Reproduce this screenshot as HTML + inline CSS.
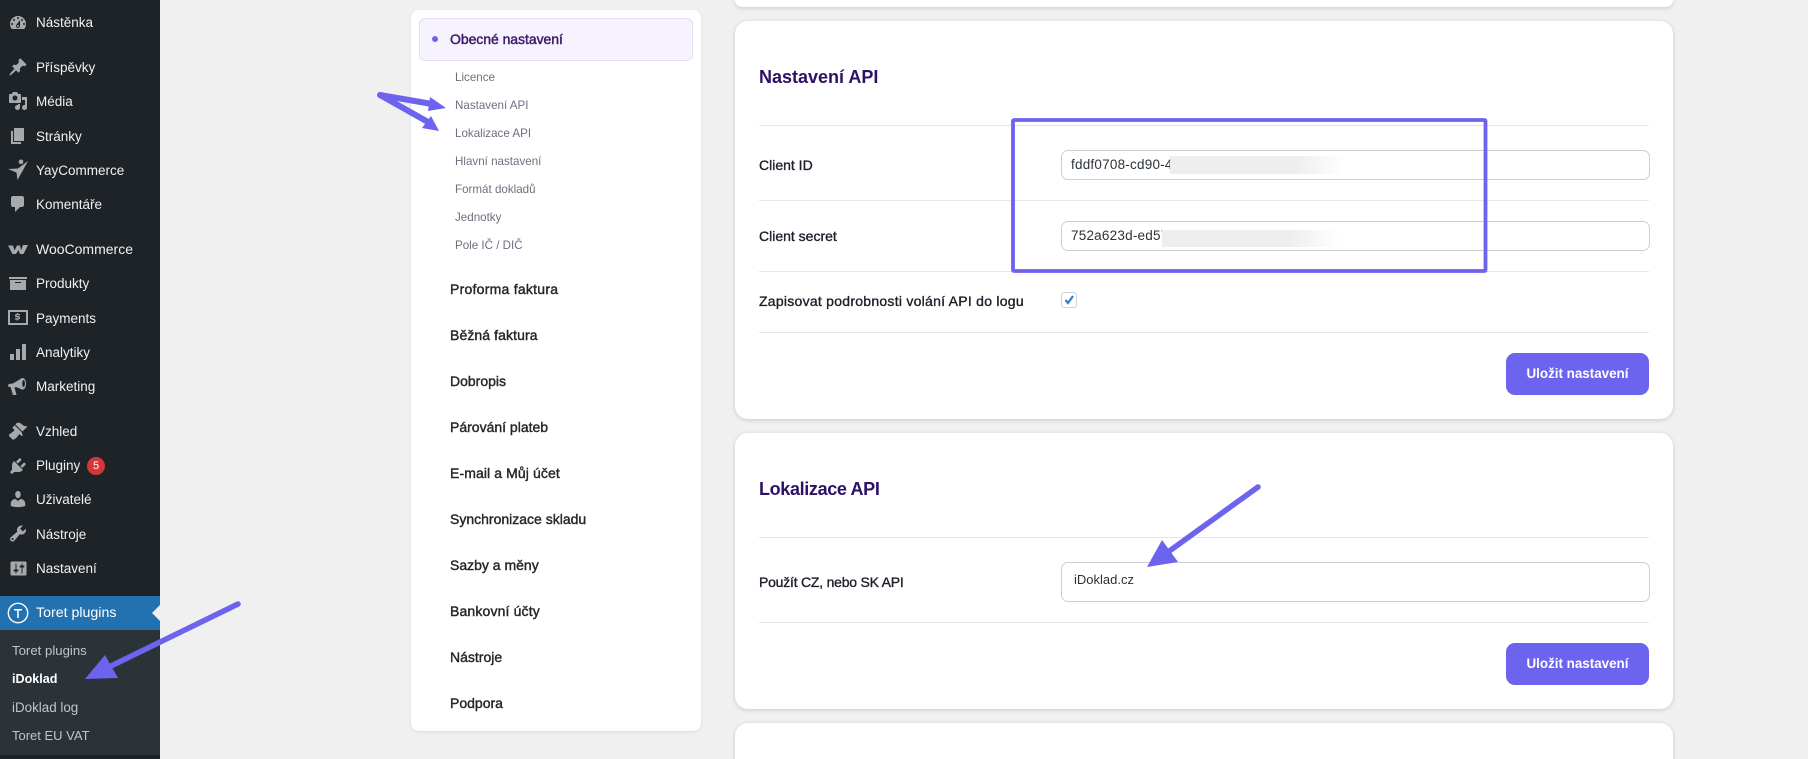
<!DOCTYPE html>
<html lang="cs"><head><meta charset="utf-8"><title>iDoklad</title>
<style>
html,body{margin:0;padding:0;width:1808px;height:759px;overflow:hidden;background:#f0f0f1;font-family:"Liberation Sans",sans-serif}
#wrap{position:relative;width:1808px;height:759px;overflow:hidden}
.a{position:absolute;white-space:nowrap}
.m{position:absolute;left:36px;margin-top:1px;color:#f0f0f1;font-size:13.5px;line-height:20px;white-space:nowrap}
.s{position:absolute;left:12px;color:#c3c4c7;font-size:13px;line-height:20px;white-space:nowrap}
.l{position:absolute;left:455px;margin-top:1px;color:#6b7080;font-size:11.6px;line-height:20px;white-space:nowrap}
.n{position:absolute;left:450px;color:#25252b;font-size:14px;line-height:20px;white-space:nowrap;-webkit-text-stroke:.4px #25252b}
.card{position:absolute;left:735px;width:938px;background:#fff;border-radius:13px;box-shadow:0 1px 5px rgba(0,0,0,.16)}
.hr{position:absolute;left:759px;width:890px;height:1px;background:#e6e6ea}
.t{position:absolute;left:759px;color:#2e1065;font-size:18px;font-weight:bold;line-height:24px;white-space:nowrap}
.f{position:absolute;left:759px;color:#1e1e2a;font-size:14px;line-height:20px;white-space:nowrap;-webkit-text-stroke:.35px #1e1e2a}
.i{position:absolute;left:1061px;width:587px;background:#fff;border:1px solid #cfccd8;border-radius:7px;box-sizing:content-box}
.v{position:absolute;color:#2c3338;font-size:13.5px;line-height:20px;white-space:nowrap}
.b{position:absolute;left:1506px;width:143px;height:42px;background:#6c63ee;border-radius:9px;color:#fff;font-size:13.4px;font-weight:bold;line-height:42px;text-align:center}
.bl{position:absolute;background:linear-gradient(to right,#eeeeee 0,#eeeeee 72%,rgba(238,238,238,0) 100%)}
svg{position:absolute;left:0;top:0}
</style></head><body><div id="wrap">

<div class="a" style="left:0;top:0;width:160px;height:759px;background:#1d2327"></div>
<div class="a" style="left:0;top:596px;width:160px;height:34px;background:#2271b1"></div>
<div class="a" style="left:0;top:630px;width:160px;height:125px;background:#2c3338"></div>

<div class="m" style="top:12px">Nástěnka</div>
<div class="m" style="top:57px">Příspěvky</div>
<div class="m" style="top:91px">Média</div>
<div class="m" style="top:126px">Stránky</div>
<div class="m" style="top:160px">YayCommerce</div>
<div class="m" style="top:194px">Komentáře</div>
<div class="m" style="top:239px;margin-top:0;font-size:14px">WooCommerce</div>
<div class="m" style="top:273px">Produkty</div>
<div class="m" style="top:308px">Payments</div>
<div class="m" style="top:342px">Analytiky</div>
<div class="m" style="top:376px">Marketing</div>
<div class="m" style="top:421px">Vzhled</div>
<div class="m" style="top:455px">Pluginy</div>
<div class="m" style="top:489px">Uživatelé</div>
<div class="m" style="top:524px">Nástroje</div>
<div class="m" style="top:558px">Nastavení</div>
<div class="m" style="top:603px;margin-top:0;color:#fff;font-size:14.2px">Toret plugins</div>
<div class="a" style="left:87px;top:457px;width:18px;height:18px;border-radius:50%;background:#d63638;color:#fff;font-size:11px;line-height:18px;text-align:center">5</div>

<div class="s" style="top:641px;font-size:13.2px">Toret plugins</div>
<div class="s" style="top:669px;color:#fff;font-weight:bold;font-size:12.6px">iDoklad</div>
<div class="s" style="top:698px;font-size:13.4px">iDoklad log</div>
<div class="s" style="top:726px">Toret EU VAT</div>

<div class="a" style="left:411px;top:10px;width:290px;height:721px;background:#fff;border-radius:8px;box-shadow:0 1px 3px rgba(0,0,0,.09)"></div>
<div class="a" style="left:419px;top:18px;width:272px;height:41px;background:#f7f3fe;border:1px solid #e6dcfb;border-radius:6px"></div>
<div class="a" style="left:432px;top:36px;width:6px;height:6px;border-radius:50%;background:#6c63ee"></div>
<div class="n" style="top:29px;color:#3b1a6b;-webkit-text-stroke:.45px #3b1a6b;letter-spacing:-.05px">Obecné nastavení</div>
<div class="l" style="top:67px">Licence</div>
<div class="l" style="top:95px">Nastavení API</div>
<div class="l" style="top:123px">Lokalizace API</div>
<div class="l" style="top:151px">Hlavní nastavení</div>
<div class="l" style="top:179px">Formát dokladů</div>
<div class="l" style="top:207px">Jednotky</div>
<div class="l" style="top:235px">Pole IČ / DIČ</div>
<div class="n" style="top:279px;letter-spacing:.25px">Proforma faktura</div>
<div class="n" style="top:325px;letter-spacing:.1px">Běžná faktura</div>
<div class="n" style="top:371px">Dobropis</div>
<div class="n" style="top:417px">Párování plateb</div>
<div class="n" style="top:463px;letter-spacing:.1px">E-mail a Můj účet</div>
<div class="n" style="top:509px">Synchronizace skladu</div>
<div class="n" style="top:555px">Sazby a měny</div>
<div class="n" style="top:601px;letter-spacing:.15px">Bankovní účty</div>
<div class="n" style="top:647px">Nástroje</div>
<div class="n" style="top:693px">Podpora</div>

<div class="card" style="top:0;height:7px;border-radius:0 0 13px 13px"></div>
<div class="card" style="top:21px;height:398px"></div>
<div class="card" style="top:433px;height:276px"></div>
<div class="card" style="top:723px;height:36px;border-radius:13px 13px 0 0"></div>

<div class="t" style="top:65px">Nastavení API</div>
<div class="hr" style="top:125px"></div>
<div class="f" style="top:155px">Client ID</div>
<div class="i" style="top:150px;height:28px"></div>
<div class="v" style="left:1071px;top:155px;letter-spacing:.22px">fddf0708-cd90-4</div>
<div class="bl" style="left:1170px;top:156px;width:174px;height:18px"></div>
<div class="hr" style="top:200px"></div>
<div class="f" style="top:226px">Client secret</div>
<div class="i" style="top:221px;height:28px"></div>
<div class="v" style="left:1071px;top:226px;letter-spacing:.22px">752a623d-ed57</div>
<div class="bl" style="left:1162px;top:230px;width:178px;height:17px"></div>
<div class="hr" style="top:271px"></div>
<div class="f" style="top:291px;letter-spacing:.26px">Zapisovat podrobnosti volání API do logu</div>
<div class="a" style="left:1061px;top:292px;width:14px;height:14px;border:1px solid #cfd0d8;border-radius:3px;background:#fff"></div>
<div class="hr" style="top:332px"></div>
<div class="b" style="top:353px">Uložit nastavení</div>

<div class="t" style="top:477px;letter-spacing:-.35px">Lokalizace API</div>
<div class="hr" style="top:537px"></div>
<div class="f" style="top:572px;letter-spacing:-.22px">Použít CZ, nebo SK API</div>
<div class="i" style="top:562px;height:38px"></div>
<div class="v" style="left:1074px;top:570px;font-size:13px">iDoklad.cz</div>
<div class="hr" style="top:622px"></div>
<div class="b" style="top:643px">Uložit nastavení</div>

<svg width="1808" height="759" viewBox="0 0 1808 759">
<path d="M160 605 152 613 160 621Z" fill="#f0f0f1"/>
<g fill="#a7aaad" fill-rule="evenodd">
<path transform="translate(8 13)" d="M3.76 16h12.48c1.1-1.37 1.76-3.11 1.76-5 0-4.42-3.58-8-8-8s-8 3.58-8 8c0 1.89.66 3.63 1.76 5zM10 4c.55 0 1 .45 1 1s-.45 1-1 1-1-.45-1-1 .45-1 1-1zM6 6c.55 0 1 .45 1 1s-.45 1-1 1-1-.45-1-1 .45-1 1-1zm8 0c.55 0 1 .45 1 1s-.45 1-1 1-1-.45-1-1 .45-1 1-1zm-5.37 5.55L12 7v6c0 1.1-.9 2-2 2s-2-.9-2-2c0-.57.24-1.08.63-1.45zM4 10c.55 0 1 .45 1 1s-.45 1-1 1-1-.45-1-1 .45-1 1-1zm12 0c.55 0 1 .45 1 1s-.45 1-1 1-1-.45-1-1 .45-1 1-1zm-5 3c0-.55-.45-1-1-1s-1 .45-1 1 .45 1 1 1 1-.45 1-1z"/>
<path transform="translate(8 57)" d="M10.44 3.02l1.82-1.82 6.36 6.35-1.83 1.82c-1.05-.68-2.48-.57-3.41.36l-.75.75c-.92.93-1.04 2.35-.35 3.41l-1.83 1.82-2.41-2.41-2.8 2.79c-.42.42-3.38 2.71-3.8 2.29s1.86-3.39 2.28-3.81l2.79-2.79L4.1 9.36l1.83-1.82c1.05.69 2.48.57 3.4-.36l.75-.75c.93-.92 1.05-2.35.36-3.41z"/>
<path transform="translate(8 91)" d="M13 11V4c0-.55-.45-1-1-1h-1.67L9 1H5L3.67 3H2c-.55 0-1 .45-1 1v7c0 .55.45 1 1 1h10c.55 0 1-.45 1-1zM7 4.5c1.38 0 2.5 1.12 2.5 2.5S8.38 9.5 7 9.5 4.5 8.38 4.5 7 5.62 4.5 7 4.5zM14 6h5v10.5c0 1.38-1.12 2.5-2.5 2.5S14 17.88 14 16.5s1.12-2.5 2.5-2.5c.17 0 .34.02.5.05V9h-3V6zm-4 8.05V13h2v3.5c0 1.38-1.12 2.5-2.5 2.5S7 17.88 7 16.5 8.12 14 9.5 14c.17 0 .34.02.5.05z"/>
<path transform="translate(8 126)" d="M6 15V2h10v13H6zm-1 1h8v2H3V5h2v11z"/>
<path d="M8 169 18 168.5 28 161 22.5 171 17.5 180 16.5 172.5ZM21 159.5a2.3 2.3 0 1 0 .01 0Z"/>
<path transform="translate(8 194)" d="M5 2h9c1.1 0 2 .9 2 2v7c0 1.1-.9 2-2 2h-2l-5 5v-5H5c-1.1 0-2-.9-2-2V4c0-1.1.9-2 2-2z"/>
<path transform="translate(8 273)" d="M19 4v2H1V4h18zM2 7h16v10H2V7zm11 3V9H7v1h6z"/>
<path d="M8 310h20v15H8Zm2 2v11h16v-11Z"/>
<path d="M16.9 313h1.2v1h1.9v1.3h-3.2c-.5 0-.5.7 0 .7h1.4c2.4 0 2.4 3.5 0 3.5h-.3v1h-1.2v-1h-1.9v-1.3h3.4c.5 0 .5-.8 0-.8h-1.4c-2.4 0-2.4-3.4 0-3.4h.1Z"/>
<path transform="translate(8 342)" d="M18 18V2h-4v16h4zm-6 0V7H8v11h4zm-6 0v-6H2v6h4z"/>
<path d="M9 384l4-.5 9-5.5c2.6-.5 4.5 3 4 7-.4 3-2 5-4 4.500l-6-2.500-1.500.5 2 7.500h-3.500l-2.500-8h-1.500c-1-.5-1-2-.5-2.500Zm14.500-4c-1.500.5-2 6.500.2 7 1.600-.5 1.800-6.500-.2-7Z"/>
<path transform="translate(8 420.500)" d="M14.480 11.060L7.410 3.990l1.500-1.500c.5-.56 2.300-.47 3.510.32 1.210.8 1.430 1.280 2.910 2.100 1.180.64 2.450 1.260 4.450.85zm-.71.71L6.700 4.700 4.930 6.470c-.39.39-.39 1.020 0 1.410l1.060 1.060c.39.39.39 1.030 0 1.420-.6.6-1.430 1.110-2.210 1.690-.35.26-.7.53-1.010.84C1.430 13.230.4 14.960 1.400 15.960c.5.5 1.070.92 1.480 1.350.41.43.83 1 1.320 1.490 1 .99 2.730-.04 4.070-1.380.31-.31.58-.66.84-1.010.58-.78 1.090-1.610 1.690-2.210.39-.39 1.030-.39 1.420 0l1.060 1.060c.39.39 1.020.39 1.410 0z"/>
<path transform="translate(8 456)" d="M13.110 4.360L9.870 7.600 8 5.730l3.240-3.240c.35-.34 1.050-.2 1.560.32.52.51.66 1.210.31 1.550zm-8 1.770l.91-1.120 9.010 9.010-1.190.84c-.71.71-2.630 1.160-3.820 1.160H6.140L4.900 17.260c-.59.59-1.540.59-2.120 0-.59-.58-.59-1.530 0-2.120l1.240-1.240v-3.880c0-1.130.4-3.190 1.090-3.890zm7.260 3.970l3.240-3.240c.34-.35 1.040-.21 1.550.31.52.51.66 1.210.31 1.550l-3.240 3.250z"/>
<path transform="translate(8 489)" d="M10 9.250c-2.270 0-2.730-3.440-2.730-3.440C7 4.020 7.820 2 9.970 2c2.160 0 2.980 2.020 2.710 3.810 0 0-.41 3.440-2.680 3.440zm0 2.570L12.720 10c2.390 0 4.520 2.330 4.520 4.530v2.490s-3.650 1.130-7.240 1.130c-3.650 0-7.240-1.130-7.240-1.130v-2.490c0-2.250 1.940-4.480 4.470-4.480z"/>
<path transform="translate(8 523.500)" d="M16.680 9.770c-1.340 1.340-3.300 1.670-4.950.99l-5.410 6.520c-.99.99-2.590.99-3.580 0s-.99-2.590 0-3.570l6.520-5.420c-.68-1.650-.35-3.610.99-4.950 1.280-1.280 3.120-1.620 4.720-1.060l-2.890 2.890 2.820 2.820 2.860-2.870c.53 1.580.18 3.390-1.080 4.650zM3.810 16.210c.4.39 1.040.39 1.430 0 .4-.4.4-1.040 0-1.430-.39-.4-1.030-.4-1.430 0-.39.39-.39 1.030 0 1.430z"/>
<path transform="translate(8.500 558.500)" d="M18 16V4c0-.55-.45-1-1-1H3c-.55 0-1 .45-1 1v12c0 .55.45 1 1 1h14c.55 0 1-.45 1-1zM8 11h1c.55 0 1 .45 1 1s-.45 1-1 1H8v1.500c0 .28-.22.5-.5.5s-.5-.22-.5-.5V13H6c-.55 0-1-.45-1-1s.45-1 1-1h1V5.500c0-.28.22-.5.5-.5s.5.22.5.5V11zm5-2h-1c-.55 0-1-.45-1-1s.45-1 1-1h1V5.500c0-.28.22-.5.5-.5s.5.22.5.5V7h1c.55 0 1 .45 1 1s-.45 1-1 1h-1v5.500c0 .28-.22.5-.5.5s-.5-.22-.5-.5V9z"/>
</g>
<path d="M8 245.500h5l1.500 5 2.500-5h3l1 5 2-5.500h5l-4.500 9h-3.500l-1.500-4-2.500 4h-3.500Z" fill="#a7aaad"/>
<circle cx="18" cy="613" r="9.700" fill="none" stroke="#fff" stroke-width="1.400"/>
<path d="M14 609h8v1.500h-3.200V618h-1.600v-7.500H14Z" fill="#fff"/>
<path d="M1065.500 300l2.500 3 5-7" fill="none" stroke="#2f82c9" stroke-width="2.200"/>

<rect x="1013" y="120" width="472.500" height="151" rx="1" fill="none" stroke="#6c63ee" stroke-width="3.800"/>

<g fill="#6c63ee" stroke="#6c63ee" stroke-linecap="round">
<path d="M238 604 111 666" fill="none" stroke-width="5.500"/>
<path d="M85 679 105 655 118 678Z" stroke="none"/>
<path d="M1258 487 1168 552" fill="none" stroke-width="5.500"/>
<path d="M1147 567 1162 540 1178 562Z" stroke="none"/>
<path d="M380 95 432 104M380 95 428 122" fill="none" stroke-width="6"/>
<path d="M446 108 430 97 428 111Z" stroke="none"/>
<path d="M439 131 431 116 422 128Z" stroke="none"/>
</g>
</svg>
</div></body></html>
